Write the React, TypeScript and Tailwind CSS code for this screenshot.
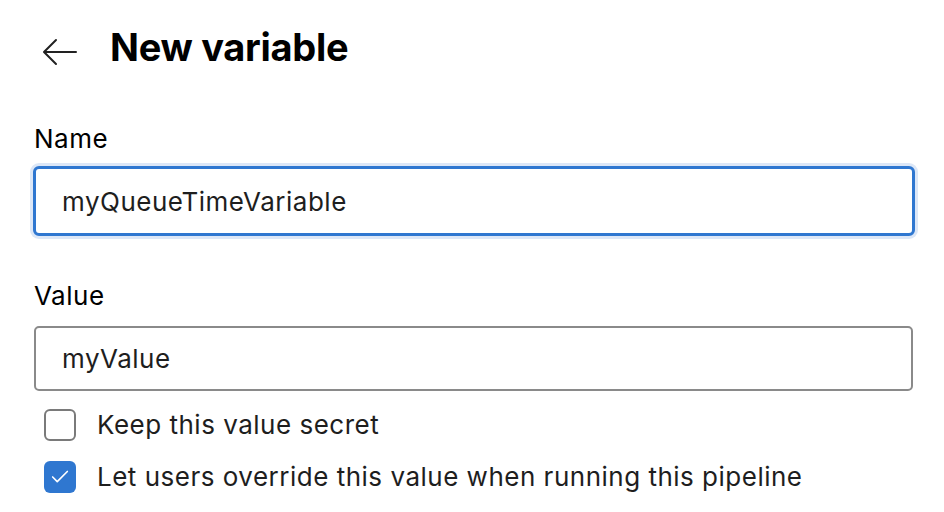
import { Check } from 'lucide-react';

export default function App() {
  return (
    <div className="w-[944px] h-[512px] bg-white text-[#1e1e1e] overflow-hidden" style={{ fontFamily: 'Inter, "Noto Sans", sans-serif' }}>
      <div className="flex items-center pl-[40px] pt-[22px] h-[72px]">
        <svg width="40" height="32" viewBox="0 0 40 32" className="mr-[30px] mt-[10px]" fill="none" stroke="#222" strokeWidth="2" strokeLinecap="round" strokeLinejoin="round">
          <path d="M36 16H5" />
          <path d="M16 4L4 16l12 12" />
        </svg>
        <h1 className="text-[38px] font-bold tracking-[-0.3px] text-black leading-none">New variable</h1>
      </div>

      <div className="pl-[34px] pt-[52px] text-[26px] tracking-[0.5px]">
        <label className="block leading-[30px] text-black">Name</label>
        <div className="mt-[12px] -ml-[1px] w-[882px] h-[70px] rounded-[6px] border-[3px] border-[#2f77d0] shadow-[0_0_0_3px_#dce7f7] bg-white flex items-center px-[26px]">
          myQueueTimeVariable
        </div>

        <label className="block mt-[45px] leading-[30px] text-black">Value</label>
        <div className="mt-[15px] w-[879px] h-[65px] rounded-[5px] border-2 border-[#8a8a8a] bg-white flex items-center px-[26px]">
          myValue
        </div>

        <div className="mt-[18px] flex flex-col gap-[20px] pl-[10px]">
          <div className="flex items-center gap-[21px]">
            <div className="w-[32px] h-[32px] rounded-[6px] border-2 border-[#7a7a7a] bg-white" />
            <span className="leading-[32px]">Keep this value secret</span>
          </div>
          <div className="flex items-center gap-[21px]">
            <div className="w-[32px] h-[32px] rounded-[6px] bg-[#2f77d0] flex items-center justify-center">
              <Check className="w-[22px] h-[22px] text-white" strokeWidth={1.8} />
            </div>
            <span className="leading-[32px]">Let users override this value when running this pipeline</span>
          </div>
        </div>
      </div>
    </div>
  );
}
